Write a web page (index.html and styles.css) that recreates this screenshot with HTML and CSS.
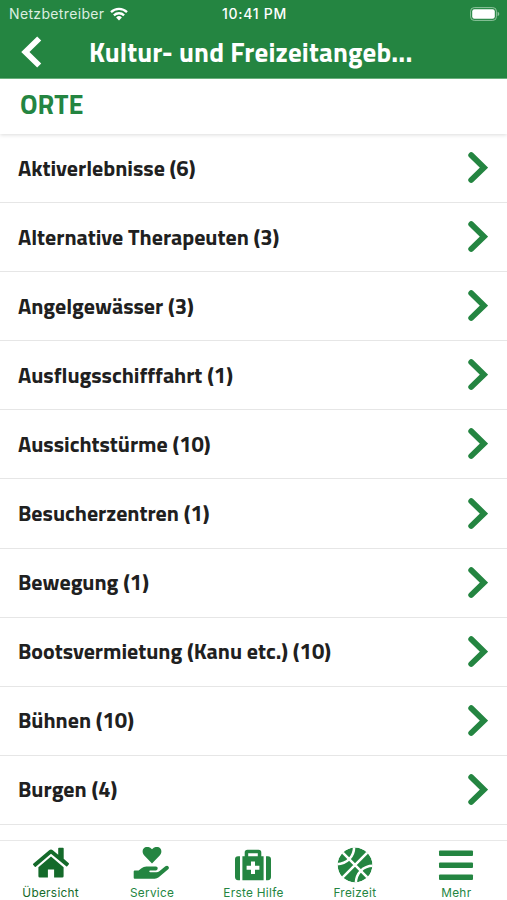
FILE: index.html
```
<!DOCTYPE html>
<html lang="de">
<head>
  <meta charset="UTF-8" />
  <meta name="viewport" content="width=device-width, initial-scale=1.0"/>
  <title>Kultur- und Freizeitangebote</title>
  <link rel="stylesheet" href="styles.css">
</head>
<body>
  <svg class="sprite">
    <symbol id="chevron" viewBox="0 0 20 32">
      <path d="M3.2 3.2 16 15.600 3.2 28" fill="none" stroke="currentColor" stroke-width="5.800" stroke-linecap="round" />
    </symbol>
  </svg>

  <header class="header">
    <div class="status">
      <div class="carrier">
        <span>Netzbetreiber</span>
        <svg width="18" height="14" viewBox="0 0 18 14">
          <g fill="none" stroke="#fff" stroke-width="2.3">
            <path d="M1 5.1a11.5 11.5 0 0 1 16 0" />
            <path d="M3.9 8.3a7.4 7.4 0 0 1 10.2 0" />
          </g>
          <path d="M9 13.4 6.1 10.5a4.2 4.2 0 0 1 5.8 0z" fill="#fff" />
        </svg>
      </div>
      <span class="time">10:41 PM</span>
      <svg class="battery" width="30" height="14" viewBox="0 0 30 14">
        <rect x=".6" y=".6" width="25.8" height="12.8" rx="3.6" fill="none" stroke="#8fc49d" />
        <rect x="2.2" y="2.2" width="22.6" height="9.6" rx="2.2" fill="#fff" />
        <path d="M27.6 4.8c2.2.7 2.2 3.7 0 4.4z" fill="#8fc49d" />
      </svg>
    </div>
    <div class="navbar">
      <svg class="back" width="22" height="32" viewBox="0 0 22 32">
        <path d="M18.2 2.5 4.4 16l13.8 13.5" fill="none" stroke="#fff" stroke-width="5.8" />
      </svg>
      <h1>Kultur- und Freizeitangeb...</h1>
    </div>
  </header>

  <h2 class="section-title"><span>ORTE</span></h2>

  <ul class="list">
    <li><span>Aktiverlebnisse (6)</span><svg class="arrow"><use href="#chevron" /></svg></li>
    <li><span>Alternative Therapeuten (3)</span><svg class="arrow"><use href="#chevron" /></svg></li>
    <li><span>Angelgewässer (3)</span><svg class="arrow"><use href="#chevron" /></svg></li>
    <li><span>Ausflugsschifffahrt (1)</span><svg class="arrow"><use href="#chevron" /></svg></li>
    <li><span>Aussichtstürme (10)</span><svg class="arrow"><use href="#chevron" /></svg></li>
    <li><span>Besucherzentren (1)</span><svg class="arrow"><use href="#chevron" /></svg></li>
    <li><span>Bewegung (1)</span><svg class="arrow"><use href="#chevron" /></svg></li>
    <li><span>Bootsvermietung (Kanu etc.) (10)</span><svg class="arrow"><use href="#chevron" /></svg></li>
    <li><span>Bühnen (10)</span><svg class="arrow"><use href="#chevron" /></svg></li>
    <li><span>Burgen (4)</span><svg class="arrow"><use href="#chevron" /></svg></li>
  </ul>

  <nav class="tabbar">
    <a class="tab active">
      <svg width="38" height="36" viewBox="0 1 38 36" fill="currentColor">
        <path d="M1.2 17.700 17.2 4.200q1.8-1.4 3.6 0l5.4 4.6V2.500q0-.8.8-.8h3.900q.8 0 .8.8v10.200l5.100 4.500q.5.5.1 1l-1.7 2q-.5.5-1 .1L19 7.700 3.8 20.800q-.6.4-1-.1l-1.7-2q-.4-.5.1-1z" />
        <path d="M19 10.400 31.600 21.200v9q0 1.4-1.4 1.4h-8.100v-8h-6.200v8H7.800q-1.400 0-1.400-1.400v-9z" />
      </svg>
      <span>Übersicht</span>
    </a>
    <a class="tab">
      <svg width="38" height="36" viewBox="0 0 38 36" fill="currentColor">
        <path d="M19 16.500 11.300 8.500C8.900 5.900 9.200 2.400 11.400.8c2.300-1.700 5.200-1.100 7.600 1.500 2.400-2.600 5.300-3.200 7.600-1.500 2.200 1.600 2.500 5.100.1 7.700z" />
        <path d="M1.700 23.600h3.900l2.900-2.300q2.100-1.700 4.900-1.700h9.400c2.600 0 2.500 3.800 0 3.800h-5.600q-.9 0-.9.900t.9.900h6.300q1.600 0 2.800-1l6.100-4.900q1.700-1.300 3 .1 1.400 1.500-.2 2.900l-9.500 8q-1.700 1.400-4 1.400h-20q-1 0-1-1v-6.100q0-1 1-1z" />
      </svg>
      <span>Service</span>
    </a>
    <a class="tab">
      <svg width="38" height="36" viewBox="0 0 38 36" fill="currentColor">
        <path d="M6 9.200v24H4.100Q1 33.200 1 30.100V12.300q0-3.100 3.100-3.100zM32 9.200v24h1.900q3.100 0 3.100-3.100V12.300q0-3.100-3.100-3.100z" />
        <path fill-rule="evenodd" d="M8.400 9.200h2.300V5.500q0-2.800 2.800-2.800h11q2.800 0 2.800 2.800v3.700h2.300v24H8.400zM14.200 6.200v3h9.600v-3zM17 14.500v4.300h-4.400v4H17v4.300h4v-4.300h4.400v-4H21v-4.300z" />
      </svg>
      <span>Erste Hilfe</span>
    </a>
    <a class="tab">
      <svg width="36" height="36" viewBox="0 0 512 512">
        <clipPath id="ball"><circle cx="256" cy="256" r="248" /></clipPath>
        <g clip-path="url(#ball)">
          <circle cx="256" cy="256" r="248" fill="currentColor" />
          <g fill="none" stroke="#fff" stroke-width="36">
            <path d="M60 60 452 452M452 60 60 452" />
            <path d="M244 0C242 140 140 242 0 244" />
            <path d="M268 512c2-140 104-242 244-244" />
          </g>
        </g>
      </svg>
      <span>Freizeit</span>
    </a>
    <a class="tab">
      <svg width="38" height="36" viewBox="0 0 38 36" fill="currentColor">
        <rect x="2" y="3.500" width="34" height="5.400" rx="1" />
        <rect x="2" y="15.500" width="34" height="5.400" rx="1" />
        <rect x="2" y="27.500" width="34" height="5.400" rx="1" />
      </svg>
      <span>Mehr</span>
    </a>
  </nav>
</body>
</html>
```
FILE: styles.css
```
* {
  box-sizing: border-box;
}
body {
  margin: 0;
  height: 900px;
  display: flex;
  flex-direction: column;
  overflow: hidden;
  background: #fff;
  color: #202020;
  font-family: "Titillium Web", "Noto Sans", sans-serif;
}
h1, h2, ul {
  margin: 0;
  padding: 0;
}
.sprite {
  display: none;
}
.header {
  height: 79px;
  background: #248541;
  border-bottom: 1px solid #6db681;
  color: #fff;
}
.status {
  display: grid;
  grid-template-columns: 1fr auto 1fr;
  align-items: center;
  height: 27px;
  padding: 0 7px 0 9px;
  font-family: Inter, sans-serif;
  font-size: 14px;
}
.carrier {
  display: flex;
  align-items: center;
  gap: 6px;
  letter-spacing: 0.35px;
  color: #dceee0;
}
.time {
  font-weight: 500;
  letter-spacing: 0.75px;
}
.battery {
  justify-self: end;
}
.navbar {
  display: flex;
  align-items: center;
  height: 50px;
  padding-left: 21px;
}
.navbar h1 {
  margin: -2px 0 0 46px;
  font-size: 27px;
  font-weight: 700;
  letter-spacing: 0.15px;
  white-space: nowrap;
}
.section-title {
  flex: none;
  height: 55px;
  padding: 7px 20px 0;
  color: #248541;
  font-size: 27px;
  font-weight: 700;
  line-height: 36px;
  box-shadow: 0 1px 4px rgba(0, 0, 0, 0.14);
}
.list {
  flex: 1;
  list-style-type: none;
}
.list li {
  display: flex;
  align-items: center;
  justify-content: space-between;
  height: 69.1px;
  padding: 0 19px 0 18px;
  border-bottom: 1px solid #e6e6e6;
  font-size: 22px;
  font-weight: 700;
  letter-spacing: -0.04px;
}
.list span {
  margin-top: -1px;
}
.arrow {
  width: 20px;
  height: 32px;
  color: #248541;
}
.tabbar {
  display: grid;
  grid-template-columns: repeat(5, 1fr);
  height: 60px;
  border-top: 1px solid #e8e8e8;
}
.tab {
  display: flex;
  flex-direction: column;
  align-items: center;
  gap: 2px;
  padding-top: 6px;
  color: #248541;
  font-family: Inter, sans-serif;
  font-size: 11.8px;
  line-height: 17px;
  letter-spacing: 0.3px;
}
.tab.active {
  color: #146a2a;
}
```
